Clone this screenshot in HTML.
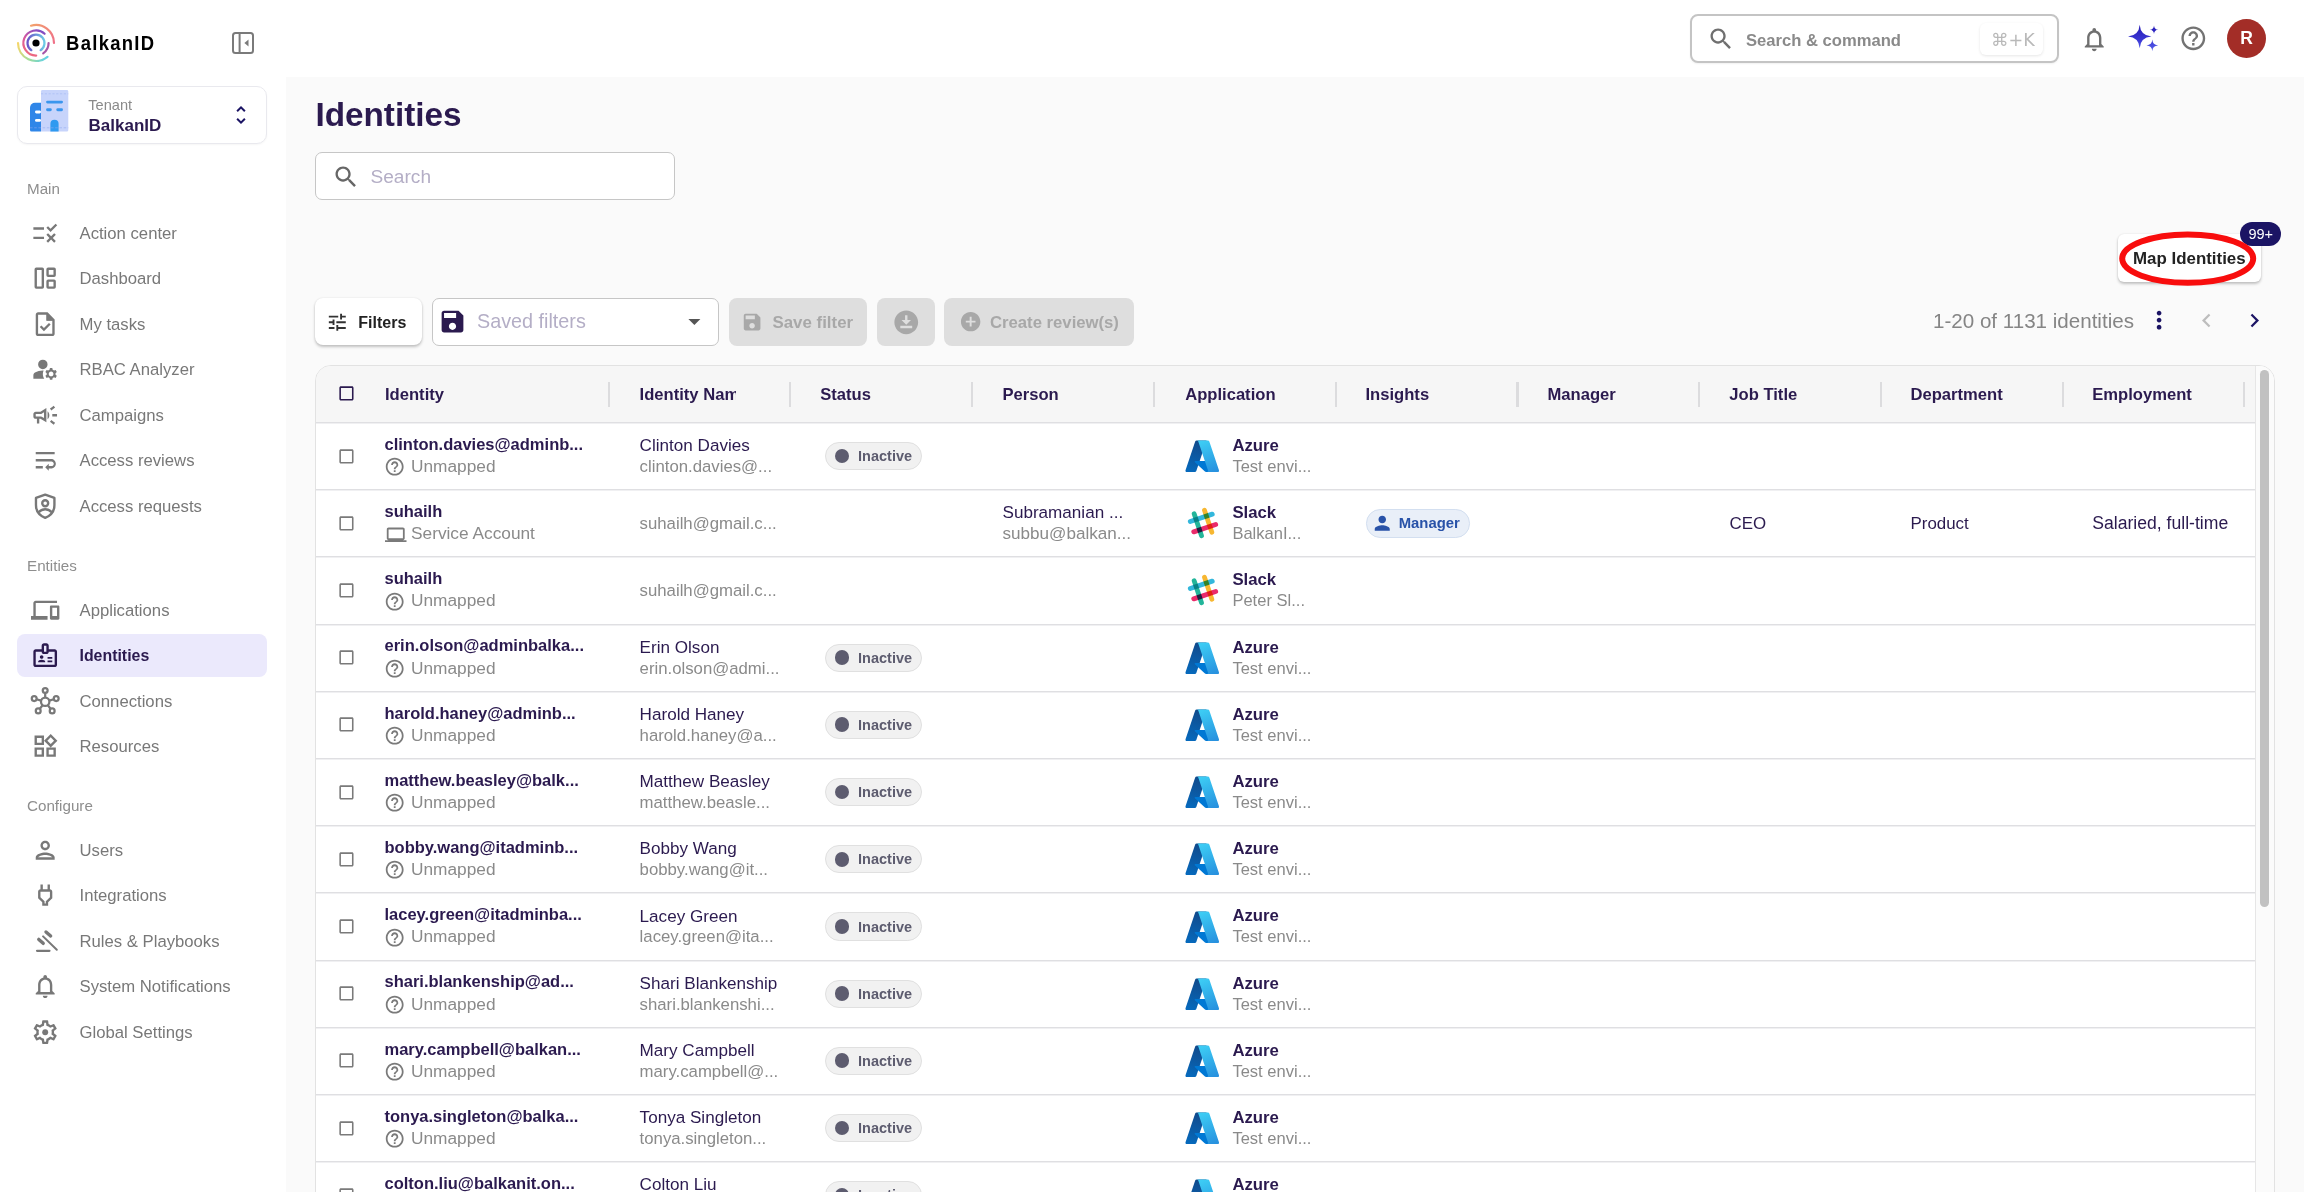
<!DOCTYPE html><html lang="en"><head><meta charset="utf-8"><title>Identities - BalkanID</title><style>
*{box-sizing:border-box;margin:0;padding:0}
html,body{width:2304px;height:1192px;overflow:hidden;background:#fff;font-family:"Liberation Sans",sans-serif}
#root{position:relative;width:2304px;height:1192px;overflow:hidden;will-change:transform}
.ic{position:absolute;display:block;overflow:visible}
.t{position:absolute;white-space:nowrap}
#main{position:absolute;left:286px;top:76.500px;width:2018px;height:1116px;background:#fafafa}
.tenant{position:absolute;left:17px;top:86px;width:250px;height:58px;border:1.500px solid #e9e9ee;border-radius:10px;background:#fff;box-shadow:0 1px 2px rgba(0,0,0,.04)}
.sel{position:absolute;left:17px;top:633.500px;width:250px;height:43.500px;border-radius:8px;background:#ebe9fc}
.gsearch{position:absolute;left:1690px;top:14px;width:369px;height:48.500px;border:2px solid #c4c4c4;border-radius:8px;background:#fff;box-shadow:0 1px 2px rgba(0,0,0,.06)}
.kbd{position:absolute;left:1980px;top:23px;width:63px;height:32px;border-radius:6px;background:#fff;box-shadow:0 1px 3px rgba(0,0,0,.10)}
.avatar{position:absolute;left:2227px;top:19px;width:39px;height:39px;border-radius:50%;background:#a32d27;color:#fff;font-weight:700;font-size:17.500px;line-height:38px;text-align:center}
.search{position:absolute;left:315px;top:152px;width:360px;height:48px;border:1.500px solid #c6c6c6;border-radius:7px;background:#fff}
.mapbtn{position:absolute;left:2117.800px;top:234px;width:143.500px;height:47.700px;border-radius:6px;background:#fff;box-shadow:0 2px 3px rgba(0,0,0,.22),0 0 2px rgba(0,0,0,.10)}
.badge{position:absolute;left:2240px;top:221.700px;width:41.400px;height:24px;border-radius:12px;background:#1b1464;color:#fff;font-size:14.500px;line-height:24px;text-align:center}
.fbtn{position:absolute;left:315px;top:298px;width:106.700px;height:47px;border-radius:8px;background:#fff;box-shadow:0 2px 3px rgba(0,0,0,.22),0 0 2px rgba(0,0,0,.10)}
.sfsel{position:absolute;left:431.700px;top:298px;width:287.300px;height:47.500px;border:1.500px solid #c6c6c6;border-radius:7px;background:#fff}
.dbtn{position:absolute;top:298px;height:47.500px;border-radius:8px;background:#dedede}
.table{position:absolute;left:315px;top:365px;width:1959.500px;height:900px;border:1.500px solid #e2e2e2;border-radius:16px;background:#fff;overflow:hidden}
.thead{position:absolute;left:0;top:0;right:0;height:58px;background:#f6f6f6}
.rl{position:absolute;left:316px;width:1940px;height:2px;background:linear-gradient(#dfdfe2 50%,#f0f0f2 50%)}
.sep{position:absolute;top:382px;width:2.200px;height:24.700px;background:#dcdcde}
.sbtrack{position:absolute;left:2255px;top:366px;width:18.500px;height:840px;background:#fbfbfb;border-left:1px solid #e6e6e6;border-top-right-radius:15px}
.sbthumb{position:absolute;left:2260px;top:370px;width:9px;height:537px;border-radius:4.500px;background:#c1c1c1}
.chip{position:absolute;left:825.200px;width:97.300px;height:28.300px;border-radius:14.200px;background:#f1f1f1;border:1px solid #e0e0e0}
.dot{position:absolute;left:834.600px;width:14.800px;height:14.800px;border-radius:50%;background:#5d5c6f}
.mchip{position:absolute;left:1366px;width:104.200px;height:28.400px;border-radius:14.200px;background:#e9eff8;border:1px solid #d3dff0}
</style></head><body><div id="root">
<div id="main"></div>
<svg class="ic" style="left:14.00px;top:21.10px;width:44px;height:44px" viewBox="-22 -22 44 44">
<g fill="none" stroke-linecap="round" stroke-width="2.2">
<path d="M-4.6,7.200 A8.500,8.500 0 1 1 4.600,7.200" stroke="url(#g1)"/>
<path d="M8.600,-9.200 A12.600,12.600 0 1 0 0.200,12.600" stroke="url(#g2)"/>
<path d="M12.600,0 A12.600,12.600 0 0 1 7.200,10.300" stroke="#a657a8"/>
<path d="M-5,-17.300 A18,18 0 0 1 18,0" stroke="url(#g3)"/>
<path d="M-18,0 A18,18 0 0 0 11.500,13.800" stroke="url(#g4)"/>
</g>
<circle cx="0" cy="0" r="3.600" fill="#000"/>
<defs>
<linearGradient id="g1" x1="-8.500" y1="0" x2="8.500" y2="0" gradientUnits="userSpaceOnUse"><stop offset="0" stop-color="#6a55c8"/><stop offset="1" stop-color="#6ccbe6"/></linearGradient>
<linearGradient id="g2" x1="6" y1="-12" x2="-6" y2="12" gradientUnits="userSpaceOnUse"><stop offset="0" stop-color="#7d4cc4"/><stop offset="0.5" stop-color="#d658a0"/><stop offset="1" stop-color="#ee6a7e"/></linearGradient>
<linearGradient id="g3" x1="-5" y1="-17" x2="18" y2="0" gradientUnits="userSpaceOnUse"><stop offset="0" stop-color="#f2a06c"/><stop offset="1" stop-color="#ef7088"/></linearGradient>
<linearGradient id="g4" x1="-18" y1="0" x2="11" y2="14" gradientUnits="userSpaceOnUse"><stop offset="0" stop-color="#f6d66a"/><stop offset="0.55" stop-color="#9fdc9a"/><stop offset="1" stop-color="#62d2e4"/></linearGradient>
</defs></svg>
<div class="t" style="left:66.40px;top:31px;font-size:20.5px;line-height:23px;font-weight:700;color:#000;letter-spacing:1.45px;transform:scaleX(0.9);transform-origin:0 0;">BalkanID</div>
<svg class="ic" style="left:232.25px;top:32.15px;width:22px;height:22px" viewBox="0 0 22 22"><g fill="none" stroke="#7a7a7a" stroke-width="2"><rect x="1" y="1" width="20" height="20" rx="2.500"/><line x1="7.600" y1="1" x2="7.600" y2="21"/></g><path d="M16.500 7.500 V14.500 L12.400 11 Z" fill="#7a7a7a"/></svg>
<div class="tenant"></div>
<svg class="ic" style="left:30px;top:90.200px;width:38.300px;height:41.400px" viewBox="0 0 38.300 41.400">
<path d="M11,1.500 a1.500,1.500 0 0 1 1.500,-1.500 h24.300 a1.500,1.500 0 0 1 1.500,1.500 v38.400 a1.500,1.500 0 0 1 -1.500,1.500 h-25.800 z" fill="#c7d4fb"/>
<path d="M11,12.700 h-6 a5,5 0 0 0 -5,5 v22.200 a1.500,1.500 0 0 0 1.500,1.500 h9.500 z" fill="#2f86e8"/>
<rect x="5" y="20.600" width="6" height="2.800" rx="1.400" fill="#fff"/>
<rect x="5" y="29" width="6" height="2.800" rx="1.400" fill="#fff"/>
<rect x="16.100" y="10.700" width="16.900" height="2.700" rx="1.350" fill="#3a96ee"/>
<rect x="16.100" y="18.300" width="5.700" height="2.900" rx="1.450" fill="#3a96ee"/>
<rect x="26.300" y="18.300" width="6.700" height="2.900" rx="1.450" fill="#3a96ee"/>
<path d="M20.400,41.400 v-7.600 a4.100,4.100 0 0 1 8.200,0 v7.600 z" fill="#2f9af0"/>
<line x1="11" y1="3.800" x2="38.300" y2="3.800" stroke="#a9bbf3" stroke-width="0.700" stroke-dasharray="2.200 1.600"/>
<line x1="0" y1="37.800" x2="38.300" y2="37.800" stroke="#8fa8ee" stroke-width="0.700" stroke-dasharray="2.600 1.600" opacity="0.8"/>
</svg>
<div class="t" style="left:88.30px;top:97px;font-size:14.6px;line-height:16px;font-weight:400;color:#8a8a8a;">Tenant</div>
<div class="t" style="left:88.60px;top:116px;font-size:17.0px;line-height:19px;font-weight:700;color:#2b1a4f;">BalkanID</div>
<svg class="ic" style="left:229.40px;top:103.20px;width:24px;height:24px" viewBox="0 0 24 24" fill="#1b1464"><path d="M12 5.830L15.170 9l1.410-1.410L12 3 7.410 7.590 8.830 9 12 5.830zm0 12.340L8.830 15l-1.410 1.410L12 21l4.590-4.590L15.170 15 12 18.170z"/></svg>
<div class="t" style="left:27.00px;top:180px;font-size:15.2px;line-height:17px;font-weight:400;color:#8e8e8e;">Main</div>
<div class="t" style="left:27.00px;top:557px;font-size:15.2px;line-height:17px;font-weight:400;color:#8e8e8e;">Entities</div>
<div class="t" style="left:27.00px;top:797px;font-size:15.2px;line-height:17px;font-weight:400;color:#8e8e8e;">Configure</div>
<svg class="ic" style="left:31.40px;top:218.60px;width:28.4px;height:28.4px" viewBox="0 0 24 24" fill="#787878"><path d="M16.54 11L13 7.46l1.41-1.41 2.12 2.12 4.24-4.24 1.41 1.41L16.54 11zM11 7H2v2h9V7zm10 6.41L19.59 12 17 14.59 14.41 12 13 13.41 15.59 16 13 18.59 14.41 20 17 17.41 19.59 20 21 18.59 18.41 16 21 13.41zM11 15H2v2h9v-2z"/></svg>
<div class="t" style="left:79.50px;top:224px;font-size:16.7px;line-height:19px;font-weight:400;color:#787878;">Action center</div>
<svg class="ic" style="left:31.40px;top:264.15px;width:28.4px;height:28.4px" viewBox="0 0 24 24"><g fill="none" stroke="#787878" stroke-width="2"><rect x="4" y="4" width="6" height="16" rx="0.5"/><rect x="14" y="4" width="6" height="6" rx="0.5"/><rect x="14" y="14" width="6" height="6" rx="0.5"/></g></svg>
<div class="t" style="left:79.50px;top:269px;font-size:16.7px;line-height:19px;font-weight:400;color:#787878;">Dashboard</div>
<svg class="ic" style="left:31.40px;top:309.70px;width:28.4px;height:28.4px" viewBox="0 0 24 24" fill="#787878"><path d="M14 2H6c-1.1 0-1.99.9-1.99 2L4 20c0 1.1.89 2 1.99 2H18c1.1 0 2-.9 2-2V8l-6-6zm4 18H6V4h7v5h5v11zm-9.18-6.95L7.4 14.46 10.94 18l5.66-5.66-1.41-1.41-4.24 4.24-2.13-2.12z"/><path d="M13.2 3.6 L18.4 8.8 H13.2 Z"/></svg>
<div class="t" style="left:79.50px;top:315px;font-size:16.7px;line-height:19px;font-weight:400;color:#787878;">My tasks</div>
<svg class="ic" style="left:31.40px;top:355.25px;width:28.4px;height:28.4px" viewBox="0 0 24 24" fill="#787878"><path d="M10 4a4 4 0 1 0 0 8 4 4 0 1 0 0-8zM10.67 13.02C10.45 13.01 10.23 13 10 13c-2.42 0-4.68.67-6.61 1.82C2.51 15.34 2 16.32 2 17.35V20h9.26c-.79-1.13-1.26-2.51-1.26-4 0-1.07.25-2.07.67-2.98zM20.75 16c0-.22-.03-.42-.06-.63l1.14-1.01-1-1.73-1.45.49c-.32-.27-.68-.48-1.08-.63L18 11h-2l-.3 1.49c-.4.15-.76.36-1.08.63l-1.45-.49-1 1.73 1.14 1.01c-.03.21-.06.41-.06.63s.03.42.06.63l-1.14 1.01 1 1.73 1.45-.49c.32.27.68.48 1.08.63L16 21h2l.3-1.49c.4-.15.76-.36 1.08-.63l1.45.49 1-1.73-1.14-1.01c.03-.21.06-.41.06-.63zM17 18c-1.1 0-2-.9-2-2s.9-2 2-2 2 .9 2 2-.9 2-2 2z"/></svg>
<div class="t" style="left:79.50px;top:360px;font-size:16.7px;line-height:19px;font-weight:400;color:#787878;">RBAC Analyzer</div>
<svg class="ic" style="left:31.40px;top:400.80px;width:28.4px;height:28.4px" viewBox="0 0 24 24" fill="#787878"><path d="M18 11v2h4v-2h-4zm-2 6.61c.96.71 2.21 1.65 3.2 2.39.4-.53.8-1.07 1.2-1.6-.99-.74-2.24-1.68-3.2-2.4-.4.54-.8 1.08-1.2 1.61zM20.4 5.6c-.4-.53-.8-1.07-1.2-1.6-.99.74-2.24 1.68-3.2 2.4.4.53.8 1.07 1.2 1.6.96-.72 2.21-1.65 3.2-2.4zM4 9c-1.1 0-2 .9-2 2v2c0 1.1.9 2 2 2h1v4h2v-4h1l5 3V6L8 9H4zm5.03 1.71L11 9.53v4.94l-1.97-1.18-.48-.29H4v-2h4.55l.48-.29zM15.5 12c0-1.33-.58-2.53-1.5-3.35v6.69c.92-.81 1.5-2.01 1.5-3.34z"/></svg>
<div class="t" style="left:79.50px;top:406px;font-size:16.7px;line-height:19px;font-weight:400;color:#787878;">Campaigns</div>
<svg class="ic" style="left:31.40px;top:446.35px;width:28.4px;height:28.4px" viewBox="0 0 24 24" fill="#787878"><path d="M4 19h6v-2H4v2zM20 5H4v2h16V5zm-3 6H4v2h13.25c1.1 0 2 .9 2 2s-.9 2-2 2H15v-2l-3 3 3 3v-2h2c2.21 0 4-1.79 4-4s-1.790-4-4-4z"/></svg>
<div class="t" style="left:79.50px;top:451px;font-size:16.7px;line-height:19px;font-weight:400;color:#787878;">Access reviews</div>
<svg class="ic" style="left:31.40px;top:491.90px;width:28.4px;height:28.4px" viewBox="0 0 24 24"><g fill="none" stroke="#787878" stroke-width="2" stroke-linejoin="round"><path d="M12 2.2 L4.2 5 V11 C4.2 16 7.4 20 12 21.8 C16.6 20 19.800 16 19.800 11 V5 Z"/><circle cx="12" cy="9.500" r="2.500"/><path d="M6.500 17.200 C8 15.300 10 14.600 12 14.600 C14 14.600 16 15.300 17.500 17.200"/></g></svg>
<div class="t" style="left:79.50px;top:497px;font-size:16.7px;line-height:19px;font-weight:400;color:#787878;">Access requests</div>
<svg class="ic" style="left:31.40px;top:595.60px;width:28.4px;height:28.4px" viewBox="0 0 24 24" fill="#787878"><path d="M4 6h18V4H4c-1.1 0-2 .9-2 2v11H0v3h14v-3H4V6zm19 2h-6c-.55 0-1 .45-1 1v10c0 .55.45 1 1 1h6c.55 0 1-.45 1-1V9c0-.55-.45-1-1-1zm-1 9h-4v-7h4v7z"/></svg>
<div class="t" style="left:79.50px;top:601px;font-size:16.7px;line-height:19px;font-weight:400;color:#787878;">Applications</div>
<div class="sel"></div>
<svg class="ic" style="left:31.40px;top:641.15px;width:28.4px;height:28.4px" viewBox="0 0 24 24" fill="#2b1a4f"><path d="M20 7h-5V4c0-1.1-.9-2-2-2h-2c-1.1 0-2 .9-2 2v3H4c-1.1 0-2 .9-2 2v11c0 1.1.9 2 2 2h16c1.1 0 2-.9 2-2V9c0-1.1-.9-2-2-2zm-9-3h2v5h-2V4zm9 16H4V9h5c0 1.1.9 2 2 2h2c1.1 0 2-.9 2-2h5v11zM9 15c.83 0 1.5-.67 1.5-1.5S9.83 12 9 12s-1.5.67-1.5 1.5S8.17 15 9 15zm2.080 1.180C10.440 15.900 9.740 15.750 9 15.750s-1.440.150-2.080.430c-.560.240-.920.780-.920 1.390V18h6v-.430c0-.610-.360-1.150-.920-1.390zM14 16.500h4V18h-4zm0-3h4V15h-4z"/></svg>
<div class="t" style="left:79.50px;top:647px;font-size:15.9px;line-height:17px;font-weight:700;color:#2b1a4f;">Identities</div>
<svg class="ic" style="left:31.40px;top:686.70px;width:28.4px;height:28.4px" viewBox="0 0 24 24"><g fill="none" stroke="#787878" stroke-width="1.9"><circle cx="12" cy="12.5" r="3.55"/><line x1="12.00" y1="8.95" x2="12.00" y2="4.90"/><circle cx="12" cy="2.9" r="2.05"/><line x1="15.41" y1="11.51" x2="19.38" y2="10.36"/><circle cx="21.3" cy="9.8" r="2.05"/><line x1="14.16" y1="15.32" x2="16.68" y2="18.61"/><circle cx="17.9" cy="20.2" r="2.05"/><line x1="9.84" y1="15.32" x2="7.32" y2="18.61"/><circle cx="6.1" cy="20.2" r="2.05"/><line x1="8.59" y1="11.51" x2="4.62" y2="10.36"/><circle cx="2.7" cy="9.8" r="2.05"/></g></svg>
<div class="t" style="left:79.50px;top:692px;font-size:16.7px;line-height:19px;font-weight:400;color:#787878;">Connections</div>
<svg class="ic" style="left:31.40px;top:732.25px;width:28.4px;height:28.4px" viewBox="0 0 24 24" fill="#787878"><path d="M16.66 4.52l2.83 2.83-2.83 2.830-2.830-2.830 2.830-2.830M9 5v4H5V5h4m10 10v4h-4v-4h4M9 15v4H5v-4h4m7.660-13.310L11 7.340 16.660 13l5.660-5.660-5.660-5.650zM11 3H3v8h8V3zm10 10h-8v8h8v-8zm-10 0H3v8h8v-8z"/></svg>
<div class="t" style="left:79.50px;top:737px;font-size:16.7px;line-height:19px;font-weight:400;color:#787878;">Resources</div>
<svg class="ic" style="left:31.40px;top:835.60px;width:28.4px;height:28.4px" viewBox="0 0 24 24" fill="#787878"><path d="M12 6c1.1 0 2 .9 2 2s-.9 2-2 2-2-.9-2-2 .9-2 2-2m0 10c2.7 0 5.8 1.290 6 2H6c.230-.720 3.310-2 6-2m0-12C9.790 4 8 5.790 8 8s1.790 4 4 4 4-1.790 4-4-1.790-4-4-4zm0 10c-2.670 0-8 1.340-8 4v2h16v-2c0-2.660-5.330-4-8-4z"/></svg>
<div class="t" style="left:79.50px;top:841px;font-size:16.7px;line-height:19px;font-weight:400;color:#787878;">Users</div>
<svg class="ic" style="left:31.40px;top:881.15px;width:28.4px;height:28.4px" viewBox="0 0 24 24" fill="#787878"><path d="M16 9v4.660l-3.500 3.510V19h-1v-1.830L8 13.650V9h8m0-6h-2v4h-4V3H8v4h-.010C6.900 6.990 6 7.890 6 8.980v5.520L9.500 18v3h5v-3l3.500-3.510V9c0-1.100-.9-2-2-2V3z"/></svg>
<div class="t" style="left:79.50px;top:886px;font-size:16.7px;line-height:19px;font-weight:400;color:#787878;">Integrations</div>
<svg class="ic" style="left:31.40px;top:926.70px;width:28.4px;height:28.4px" viewBox="0 0 24 24"><g fill="none" stroke="#787878" stroke-linecap="round"><line x1="5.1" y1="20.100" x2="15.600" y2="20.100" stroke-width="1.900"/><line x1="10.200" y1="7.900" x2="21.800" y2="19.200" stroke-width="1.700"/><line x1="12.700" y1="4.200" x2="16.600" y2="7.600" stroke-width="2.900"/><line x1="6.600" y1="10.500" x2="10.300" y2="13.800" stroke-width="2.900"/></g></svg>
<div class="t" style="left:79.50px;top:932px;font-size:16.7px;line-height:19px;font-weight:400;color:#787878;">Rules &amp; Playbooks</div>
<svg class="ic" style="left:31.40px;top:972.25px;width:28.4px;height:28.4px" viewBox="0 0 24 24" fill="#787878"><path d="M12 22c1.100 0 2-.9 2-2h-4c0 1.100.9 2 2 2zm6-6v-5c0-3.070-1.630-5.640-4.500-6.320V4c0-.830-.670-1.500-1.500-1.500s-1.500.670-1.500 1.500v.680C7.640 5.360 6 7.920 6 11v5l-2 2v1h16v-1l-2-2zm-2 1H8v-6c0-2.480 1.510-4.500 4-4.500s4 2.020 4 4.500v6z"/></svg>
<div class="t" style="left:79.50px;top:977px;font-size:16.7px;line-height:19px;font-weight:400;color:#787878;">System Notifications</div>
<svg class="ic" style="left:31.40px;top:1017.80px;width:28.4px;height:28.4px" viewBox="0 0 24 24" fill="#787878"><path d="M19.43 12.98c.04-.32.07-.64.07-.98 0-.34-.03-.66-.07-.98l2.110-1.650c.19-.15.24-.42.12-.64l-2-3.460c-.09-.16-.26-.25-.44-.25-.06 0-.12.01-.17.03l-2.490 1c-.52-.4-1.080-.73-1.690-.98l-.38-2.650C14.460 2.180 14.250 2 14 2h-4c-.25 0-.46.18-.49.42l-.38 2.650c-.61.25-1.170.59-1.690.98l-2.490-1c-.06-.02-.12-.03-.18-.03-.17 0-.34.09-.43.25l-2 3.460c-.13.22-.07.49.12.64l2.110 1.650c-.04.32-.07.65-.07.98 0 .33.03.66.07.98l-2.110 1.650c-.19.15-.24.42-.12.64l2 3.460c.09.16.26.25.44.25.06 0 .12-.01.17-.03l2.490-1c.52.4 1.080.73 1.690.98l.38 2.650c.03.24.24.42.49.42h4c.25 0 .46-.18.49-.42l.38-2.650c.61-.25 1.170-.59 1.690-.98l2.490 1c.06.02.12.03.18.03.17 0 .34-.09.43-.25l2-3.460c.12-.22.07-.49-.12-.64l-2.110-1.650zm-1.980-1.710c.04.31.05.52.05.73 0 .21-.02.43-.05.73l-.14 1.130.89.7 1.080.84-.7 1.210-1.270-.51-1.040-.42-.9.68c-.43.32-.84.56-1.250.73l-1.060.43-.16 1.130-.2 1.350h-1.400l-.19-1.350-.16-1.130-1.060-.43c-.43-.18-.83-.41-1.230-.71l-.91-.7-1.060.43-1.270.51-.7-1.210 1.080-.84.89-.7-.14-1.130c-.03-.31-.05-.54-.05-.74s.02-.43.05-.73l.14-1.130-.89-.7-1.080-.84.7-1.210 1.270.51 1.040.42.9-.68c.43-.32.84-.56 1.250-.73l1.060-.43.16-1.130.2-1.350h1.390l.19 1.350.16 1.130 1.060.43c.43.18.83.41 1.230.71l.91.7 1.060-.43 1.270-.51.7 1.210-1.070.85-.89.7.14 1.130z"/><circle cx="12" cy="12" r="2.5"/></svg>
<div class="t" style="left:79.50px;top:1023px;font-size:16.7px;line-height:19px;font-weight:400;color:#787878;">Global Settings</div>
<div class="gsearch"></div>
<svg class="ic" style="left:1706.50px;top:25.00px;width:28px;height:28px" viewBox="0 0 24 24" fill="#6f6f6f"><path d="M15.5 14h-.79l-.28-.27C15.41 12.59 16 11.11 16 9.5 16 5.91 13.09 3 9.5 3S3 5.91 3 9.5 5.91 16 9.5 16c1.610 0 3.090-.59 4.230-1.570l.27.28v.79l5 4.990L20.490 19l-4.990-5zm-6 0C7.010 14 5 11.990 5 9.500S7.010 5 9.500 5 14 7.010 14 9.500 11.990 14 9.500 14z"/></svg>
<div class="t" style="left:1746.00px;top:31px;font-size:16.6px;line-height:19px;font-weight:700;color:#8a8a8a;">Search &amp; command</div>
<div class="kbd"></div>
<div class="t" style="left:1991.00px;top:30px;font-size:17.6px;line-height:20px;font-weight:400;color:#b9b9b9;font-family:'DejaVu Sans','Liberation Sans',sans-serif;">&#8984;+K</div>
<svg class="ic" style="left:2079.55px;top:25.35px;width:28.5px;height:28.5px" viewBox="0 0 24 24" fill="#707070"><path d="M12 22c1.100 0 2-.9 2-2h-4c0 1.100.9 2 2 2zm6-6v-5c0-3.070-1.630-5.640-4.500-6.320V4c0-.830-.670-1.500-1.500-1.500s-1.500.670-1.500 1.500v.680C7.640 5.360 6 7.920 6 11v5l-2 2v1h16v-1l-2-2zm-2 1H8v-6c0-2.480 1.510-4.500 4-4.500s4 2.020 4 4.500v6z"/></svg>
<svg class="ic" style="left:2124px;top:20px;width:40px;height:36px" viewBox="2124 20 40 36"><defs><linearGradient id="spk" x1="0" y1="24" x2="0" y2="52" gradientUnits="userSpaceOnUse"><stop offset="0" stop-color="#2418b4"/><stop offset="0.55" stop-color="#3a36d2"/><stop offset="1" stop-color="#5a66ee"/></linearGradient></defs><path fill="url(#spk)" d="M2139.7,24.8 Q2140.52,35.68 2151.3999999999996,36.5 Q2140.52,37.32 2139.7,48.2 Q2138.88,37.32 2128.0,36.5 Q2138.88,35.68 2139.7,24.8 Z M2154.0,25.4 Q2154.22,29.48 2158.3,29.7 Q2154.22,29.91 2154.0,34.0 Q2153.78,29.91 2149.7,29.7 Q2153.78,29.48 2154.0,25.4 Z M2152.3,39.6 Q2152.59,45.11 2158.1000000000004,45.4 Q2152.59,45.69 2152.3,51.199999999999996 Q2152.01,45.69 2146.5,45.4 Q2152.01,45.11 2152.3,39.6 Z"/></svg>
<svg class="ic" style="left:2179.00px;top:24.30px;width:28.6px;height:28.6px" viewBox="0 0 24 24" fill="#737373"><path d="M11 18h2v-2h-2v2zm1-16C6.480 2 2 6.480 2 12s4.480 10 10 10 10-4.480 10-10S17.520 2 12 2zm0 18c-4.410 0-8-3.590-8-8s3.590-8 8-8 8 3.590 8 8-3.590 8-8 8zm0-14c-2.210 0-4 1.790-4 4h2c0-1.100.9-2 2-2s2 .9 2 2c0 2-3 1.750-3 5h2c0-2.250 3-2.500 3-5 0-2.210-1.790-4-4-4z"/></svg>
<div class="avatar">R</div>
<div class="t" style="left:315.40px;top:96px;font-size:33.3px;line-height:37px;font-weight:700;color:#2b1a4f;">Identities</div>
<div class="search"></div>
<svg class="ic" style="left:331.50px;top:162.50px;width:28px;height:28px" viewBox="0 0 24 24" fill="#666"><path d="M15.5 14h-.79l-.28-.27C15.41 12.59 16 11.11 16 9.5 16 5.91 13.09 3 9.5 3S3 5.91 3 9.5 5.91 16 9.5 16c1.610 0 3.090-.59 4.230-1.570l.27.28v.79l5 4.990L20.490 19l-4.990-5zm-6 0C7.010 14 5 11.990 5 9.500S7.010 5 9.500 5 14 7.010 14 9.500 11.990 14 9.500 14z"/></svg>
<div class="t" style="left:370.50px;top:166px;font-size:19.1px;line-height:21px;font-weight:400;color:#b4aec6;">Search</div>
<div class="mapbtn"></div>
<div class="t" style="left:2133.00px;top:249px;font-size:16.9px;line-height:19px;font-weight:700;color:#222;">Map Identities</div>
<div class="badge">99+</div>
<svg class="ic" style="left:2110px;top:222px;width:160px;height:74px" viewBox="2110 222 160 74"><ellipse cx="2187.700" cy="258.600" rx="65.500" ry="24.200" fill="none" stroke="#f80d0d" stroke-width="6"/></svg>
<div class="fbtn"></div>
<svg class="ic" style="left:326.20px;top:310.50px;width:22.6px;height:22.6px" viewBox="0 0 24 24" fill="#333"><path d="M3 17v2h6v-2H3zM3 5v2h10V5H3zm10 16v-2h8v-2h-8v-2h-2v6h2zM7 9v2H3v2h4v2h2V9H7zm14 4v-2H11v2h10zm-6-4h2V7h4V5h-4V3h-2v6z"/></svg>
<div class="t" style="left:358.30px;top:314px;font-size:16.0px;line-height:17px;font-weight:700;color:#222;">Filters</div>
<div class="sfsel"></div>
<svg class="ic" style="left:438.30px;top:307.10px;width:29px;height:29px" viewBox="0 0 24 24" fill="#2b1a4f"><path d="M17 3H5c-1.110 0-2 .9-2 2v14c0 1.100.890 2 2 2h14c1.100 0 2-.9 2-2V7l-4-4zm-5 16c-1.660 0-3-1.340-3-3s1.340-3 3-3 3 1.340 3 3-1.340 3-3 3zm3-10H5V5h10v4z"/></svg>
<div class="t" style="left:477.00px;top:310px;font-size:19.8px;line-height:22px;font-weight:400;color:#b4aec6;">Saved filters</div>
<svg class="ic" style="left:679.60px;top:307.40px;width:28.8px;height:28.8px" viewBox="0 0 24 24" fill="#555"><path d="M7 10l5 5 5-5z"/></svg>
<div class="dbtn" style="left:729px;width:138px"></div>
<svg class="ic" style="left:741.00px;top:310.60px;width:22.2px;height:22.2px" viewBox="0 0 24 24" fill="#a8a8a8"><path d="M17 3H5c-1.110 0-2 .9-2 2v14c0 1.100.890 2 2 2h14c1.100 0 2-.9 2-2V7l-4-4zm-5 16c-1.660 0-3-1.340-3-3s1.340-3 3-3 3 1.340 3 3-1.340 3-3 3zm3-10H5V5h10v4z"/></svg>
<div class="t" style="left:772.50px;top:313px;font-size:16.86px;line-height:19px;font-weight:700;color:#a8a8a8;">Save filter</div>
<div class="dbtn" style="left:877px;width:57.500px"></div>
<svg class="ic" style="left:891.75px;top:307.75px;width:28.5px;height:28.5px" viewBox="0 0 24 24" fill="#a8a8a8"><path d="M12 2C6.490 2 2 6.490 2 12s4.490 10 10 10 10-4.490 10-10S17.510 2 12 2zm-1 8V6h2v4h3l-4 4-4-4h3zm6 7H7v-2h10v2z"/></svg>
<div class="dbtn" style="left:944.200px;width:189.800px"></div>
<svg class="ic" style="left:958.85px;top:310.05px;width:23.3px;height:23.3px" viewBox="0 0 24 24" fill="#a8a8a8"><path d="M12 2C6.480 2 2 6.480 2 12s4.480 10 10 10 10-4.480 10-10S17.520 2 12 2zm5 11h-4v4h-2v-4H7v-2h4V7h2v4h4v2z"/></svg>
<div class="t" style="left:990.00px;top:313px;font-size:16.7px;line-height:19px;font-weight:700;color:#a8a8a8;">Create review(s)</div>
<div class="t" style="left:1933.00px;top:309px;font-size:20.58px;line-height:23px;font-weight:400;color:#858585;">1-20 of 1131 identities</div>
<svg class="ic" style="left:2144.50px;top:306.40px;width:28.2px;height:28.2px" viewBox="0 0 24 24" fill="#1b1464"><path d="M12 8c1.100 0 2-.9 2-2s-.9-2-2-2-2 .9-2 2 .9 2 2 2zm0 2c-1.100 0-2 .9-2 2s.9 2 2 2 2-.9 2-2-.9-2-2-2zm0 6c-1.100 0-2 .9-2 2s.9 2 2 2 2-.9 2-2-.9-2-2-2z"/></svg>
<svg class="ic" style="left:2192.50px;top:307.00px;width:27px;height:27px" viewBox="0 0 24 24" fill="#bdbdbd"><path d="M15.410 7.410L14 6l-6 6 6 6 1.410-1.410L10.830 12z"/></svg>
<svg class="ic" style="left:2241.30px;top:307.00px;width:27px;height:27px" viewBox="0 0 24 24" fill="#1b1464"><path d="M10 6L8.590 7.410 13.170 12l-4.580 4.590L10 18l6-6z"/></svg>
<div class="table"><div class="thead"></div></div>
<div class="rl" style="top:422px"></div>
<div class="rl" style="top:489px"></div>
<div class="rl" style="top:556px"></div>
<div class="rl" style="top:624px"></div>
<div class="rl" style="top:691px"></div>
<div class="rl" style="top:758px"></div>
<div class="rl" style="top:825px"></div>
<div class="rl" style="top:892px"></div>
<div class="rl" style="top:960px"></div>
<div class="rl" style="top:1027px"></div>
<div class="rl" style="top:1094px"></div>
<div class="rl" style="top:1161px"></div>
<div class="rl" style="top:1228px"></div>
<div class="sbtrack"></div><div class="sbthumb"></div>
<div class="sep" style="left:607.90px"></div>
<div class="sep" style="left:789.30px"></div>
<div class="sep" style="left:970.60px"></div>
<div class="sep" style="left:1153.30px"></div>
<div class="sep" style="left:1334.90px"></div>
<div class="sep" style="left:1516.40px"></div>
<div class="sep" style="left:1698.20px"></div>
<div class="sep" style="left:1879.70px"></div>
<div class="sep" style="left:2061.50px"></div>
<div class="sep" style="left:2242.90px"></div>
<div class="t" style="left:385.00px;top:385px;font-size:16.6px;line-height:19px;font-weight:700;color:#2b1a4f;">Identity</div>
<div class="t" style="left:639.60px;top:385px;font-size:16.6px;line-height:19px;font-weight:700;color:#2b1a4f;width:96px;overflow:hidden;">Identity Name</div>
<div class="t" style="left:820.20px;top:385px;font-size:16.6px;line-height:19px;font-weight:700;color:#2b1a4f;">Status</div>
<div class="t" style="left:1002.50px;top:385px;font-size:16.6px;line-height:19px;font-weight:700;color:#2b1a4f;">Person</div>
<div class="t" style="left:1185.20px;top:385px;font-size:16.6px;line-height:19px;font-weight:700;color:#2b1a4f;">Application</div>
<div class="t" style="left:1365.50px;top:385px;font-size:16.6px;line-height:19px;font-weight:700;color:#2b1a4f;">Insights</div>
<div class="t" style="left:1547.50px;top:385px;font-size:16.6px;line-height:19px;font-weight:700;color:#2b1a4f;">Manager</div>
<div class="t" style="left:1729.30px;top:385px;font-size:16.6px;line-height:19px;font-weight:700;color:#2b1a4f;">Job Title</div>
<div class="t" style="left:1910.50px;top:385px;font-size:16.6px;line-height:19px;font-weight:700;color:#2b1a4f;">Department</div>
<div class="t" style="left:2092.30px;top:385px;font-size:16.6px;line-height:19px;font-weight:700;color:#2b1a4f;">Employment</div>
<svg class="ic" style="left:336.65px;top:384.25px;width:18.9px;height:18.9px" viewBox="0 0 24 24" fill="#2b1a4f"><path d="M19 5v14H5V5h14m0-2H5c-1.100 0-2 .9-2 2v14c0 1.100.9 2 2 2h14c1.100 0 2-.9 2-2V5c0-1.100-.9-2-2-2z"/></svg>
<svg class="ic" style="left:336.60px;top:446.65px;width:18.9px;height:18.9px" viewBox="0 0 24 24" fill="#7a7a7a"><path d="M19 5v14H5V5h14m0-2H5c-1.100 0-2 .9-2 2v14c0 1.100.9 2 2 2h14c1.100 0 2-.9 2-2V5c0-1.100-.9-2-2-2z"/></svg>
<div class="t" style="left:384.50px;top:435px;font-size:16.5px;line-height:18px;font-weight:700;color:#2b1a4f;">clinton.davies@adminb...</div>
<svg class="ic" style="left:384.00px;top:456.20px;width:21.4px;height:21.4px" viewBox="0 0 24 24" fill="#7a7a7a"><path d="M11 18h2v-2h-2v2zm1-16C6.480 2 2 6.480 2 12s4.480 10 10 10 10-4.480 10-10S17.520 2 12 2zm0 18c-4.410 0-8-3.590-8-8s3.590-8 8-8 8 3.590 8 8-3.590 8-8 8zm0-14c-2.210 0-4 1.790-4 4h2c0-1.100.9-2 2-2s2 .9 2 2c0 2-3 1.750-3 5h2c0-2.250 3-2.500 3-5 0-2.210-1.790-4-4-4z"/></svg>
<div class="t" style="left:411.00px;top:456px;font-size:17.3px;line-height:20px;font-weight:400;color:#8a8a8a;">Unmapped</div>
<div class="t" style="left:639.60px;top:436px;font-size:17.1px;line-height:19px;font-weight:400;color:#2b1a4f;">Clinton Davies</div>
<div class="t" style="left:639.60px;top:457px;font-size:16.75px;line-height:19px;font-weight:400;color:#8a8a8a;">clinton.davies@...</div>
<div class="chip" style="top:442.00px"></div><div class="dot" style="top:448.60px"></div>
<div class="t" style="left:858.10px;top:448px;font-size:14.5px;line-height:16px;font-weight:700;color:#5d5c6f;">Inactive</div>
<svg class="ic" style="left:1184.2px;top:438.20px;width:36.500px;height:36.500px" viewBox="0 0 96 96"><defs><linearGradient id="aza0" x1="0.5" y1="0" x2="0.300" y2="1"><stop offset="0" stop-color="#114a8b"/><stop offset="1" stop-color="#0669bc"/></linearGradient><linearGradient id="azb0" x1="0.4" y1="0" x2="0.700" y2="1"><stop offset="0" stop-color="#3ccbf4"/><stop offset="1" stop-color="#2892df"/></linearGradient></defs>
<path d="M33.340 6.540h26.040l-27.030 80.100a4.150 4.150 0 0 1-3.940 2.810H8.150a4.140 4.140 0 0 1-3.930-5.470L29.400 9.380a4.150 4.150 0 0 1 3.940-2.830z" fill="url(#aza0)"/>
<path d="M71.170 60.260H29.880a1.910 1.910 0 0 0-1.300 3.310l26.530 24.760a4.170 4.170 0 0 0 2.850 1.130h23.380z" fill="#0078d4"/>
<path d="M66.600 9.360a4.140 4.140 0 0 0-3.930-2.820H33.650a4.150 4.150 0 0 1 3.930 2.820l25.180 74.620a4.150 4.150 0 0 1-3.930 5.480h29.020a4.150 4.150 0 0 0 3.930-5.480z" fill="url(#azb0)"/></svg>
<div class="t" style="left:1232.40px;top:436px;font-size:16.75px;line-height:19px;font-weight:700;color:#2b1a4f;">Azure</div>
<div class="t" style="left:1232.40px;top:457px;font-size:16.55px;line-height:19px;font-weight:400;color:#8a8a8a;">Test envi...</div>
<svg class="ic" style="left:336.60px;top:513.85px;width:18.9px;height:18.9px" viewBox="0 0 24 24" fill="#7a7a7a"><path d="M19 5v14H5V5h14m0-2H5c-1.100 0-2 .9-2 2v14c0 1.100.9 2 2 2h14c1.100 0 2-.9 2-2V5c0-1.100-.9-2-2-2z"/></svg>
<div class="t" style="left:384.50px;top:502px;font-size:16.5px;line-height:18px;font-weight:700;color:#2b1a4f;">suhailh</div>
<svg class="ic" style="left:384.50px;top:523.55px;width:21.5px;height:21.5px" viewBox="0 0 24 24" fill="#7a7a7a"><path d="M20 18c1.100 0 1.990-.9 1.990-2L22 6c0-1.100-.9-2-2-2H4c-1.100 0-2 .9-2 2v10c0 1.100.9 2 2 2H0v2h24v-2h-4zM4 6h16v10H4V6z"/></svg>
<div class="t" style="left:411.00px;top:523px;font-size:17.3px;line-height:20px;font-weight:400;color:#8a8a8a;">Service Account</div>
<div class="t" style="left:639.60px;top:514px;font-size:16.75px;line-height:19px;font-weight:400;color:#8a8a8a;">suhailh@gmail.c...</div>
<svg class="ic" style="left:1185.60px;top:506.10px;width:34px;height:34px;isolation:isolate" viewBox="-17 -17 34 34"><g transform="rotate(-18.500)" stroke-linecap="round" stroke-width="4.800" fill="none"><line x1="-5.45" y1="-11.6" x2="-5.450" y2="11.600" stroke="#22b59a" style="mix-blend-mode:multiply"/><line x1="5.450" y1="-11.600" x2="5.450" y2="11.600" stroke="#f7b731" style="mix-blend-mode:multiply"/><line x1="-11.600" y1="-5.450" x2="11.600" y2="-5.450" stroke="#33b7dc" style="mix-blend-mode:multiply"/><line x1="-11.600" y1="5.450" x2="11.600" y2="5.450" stroke="#ea2a6a" style="mix-blend-mode:multiply"/></g></svg>
<div class="t" style="left:1232.40px;top:503px;font-size:16.75px;line-height:19px;font-weight:700;color:#2b1a4f;">Slack</div>
<div class="t" style="left:1232.40px;top:524px;font-size:16.55px;line-height:19px;font-weight:400;color:#8a8a8a;">BalkanI...</div>
<div class="t" style="left:1002.50px;top:503px;font-size:17.1px;line-height:19px;font-weight:400;color:#2b1a4f;">Subramanian ...</div>
<div class="t" style="left:1002.50px;top:524px;font-size:17.1px;line-height:19px;font-weight:400;color:#8a8a8a;">subbu@balkan...</div>
<div class="mchip" style="top:509.40px"></div>
<svg class="ic" style="left:1371.25px;top:512.35px;width:22.5px;height:22.5px" viewBox="0 0 24 24" fill="#2852a8"><path d="M12 12c2.210 0 4-1.790 4-4s-1.790-4-4-4-4 1.790-4 4 1.790 4 4 4zm0 2c-2.670 0-8 1.340-8 4v2h16v-2c0-2.660-5.330-4-8-4z"/></svg>
<div class="t" style="left:1398.75px;top:515px;font-size:14.85px;line-height:16px;font-weight:700;color:#2852a8;">Manager</div>
<div class="t" style="left:1729.50px;top:514px;font-size:16.9px;line-height:19px;font-weight:400;color:#2b1a4f;">CEO</div>
<div class="t" style="left:1910.50px;top:514px;font-size:16.9px;line-height:19px;font-weight:400;color:#2b1a4f;">Product</div>
<div class="t" style="left:2092.30px;top:513px;font-size:17.6px;line-height:20px;font-weight:400;color:#2b1a4f;">Salaried, full-time</div>
<svg class="ic" style="left:336.60px;top:581.05px;width:18.9px;height:18.9px" viewBox="0 0 24 24" fill="#7a7a7a"><path d="M19 5v14H5V5h14m0-2H5c-1.100 0-2 .9-2 2v14c0 1.100.9 2 2 2h14c1.100 0 2-.9 2-2V5c0-1.100-.9-2-2-2z"/></svg>
<div class="t" style="left:384.50px;top:569px;font-size:16.5px;line-height:18px;font-weight:700;color:#2b1a4f;">suhailh</div>
<svg class="ic" style="left:384.00px;top:590.60px;width:21.4px;height:21.4px" viewBox="0 0 24 24" fill="#7a7a7a"><path d="M11 18h2v-2h-2v2zm1-16C6.480 2 2 6.480 2 12s4.480 10 10 10 10-4.480 10-10S17.520 2 12 2zm0 18c-4.410 0-8-3.590-8-8s3.590-8 8-8 8 3.590 8 8-3.590 8-8 8zm0-14c-2.210 0-4 1.790-4 4h2c0-1.100.9-2 2-2s2 .9 2 2c0 2-3 1.750-3 5h2c0-2.250 3-2.500 3-5 0-2.210-1.790-4-4-4z"/></svg>
<div class="t" style="left:411.00px;top:590px;font-size:17.3px;line-height:20px;font-weight:400;color:#8a8a8a;">Unmapped</div>
<div class="t" style="left:639.60px;top:581px;font-size:16.75px;line-height:19px;font-weight:400;color:#8a8a8a;">suhailh@gmail.c...</div>
<svg class="ic" style="left:1185.60px;top:573.30px;width:34px;height:34px;isolation:isolate" viewBox="-17 -17 34 34"><g transform="rotate(-18.500)" stroke-linecap="round" stroke-width="4.800" fill="none"><line x1="-5.45" y1="-11.6" x2="-5.450" y2="11.600" stroke="#22b59a" style="mix-blend-mode:multiply"/><line x1="5.450" y1="-11.600" x2="5.450" y2="11.600" stroke="#f7b731" style="mix-blend-mode:multiply"/><line x1="-11.600" y1="-5.450" x2="11.600" y2="-5.450" stroke="#33b7dc" style="mix-blend-mode:multiply"/><line x1="-11.600" y1="5.450" x2="11.600" y2="5.450" stroke="#ea2a6a" style="mix-blend-mode:multiply"/></g></svg>
<div class="t" style="left:1232.40px;top:570px;font-size:16.75px;line-height:19px;font-weight:700;color:#2b1a4f;">Slack</div>
<div class="t" style="left:1232.40px;top:591px;font-size:16.55px;line-height:19px;font-weight:400;color:#8a8a8a;">Peter Sl...</div>
<svg class="ic" style="left:336.60px;top:648.25px;width:18.9px;height:18.9px" viewBox="0 0 24 24" fill="#7a7a7a"><path d="M19 5v14H5V5h14m0-2H5c-1.100 0-2 .9-2 2v14c0 1.100.9 2 2 2h14c1.100 0 2-.9 2-2V5c0-1.100-.9-2-2-2z"/></svg>
<div class="t" style="left:384.50px;top:636px;font-size:16.5px;line-height:18px;font-weight:700;color:#2b1a4f;">erin.olson@adminbalka...</div>
<svg class="ic" style="left:384.00px;top:657.80px;width:21.4px;height:21.4px" viewBox="0 0 24 24" fill="#7a7a7a"><path d="M11 18h2v-2h-2v2zm1-16C6.480 2 2 6.480 2 12s4.480 10 10 10 10-4.480 10-10S17.520 2 12 2zm0 18c-4.410 0-8-3.590-8-8s3.590-8 8-8 8 3.590 8 8-3.590 8-8 8zm0-14c-2.210 0-4 1.790-4 4h2c0-1.100.9-2 2-2s2 .9 2 2c0 2-3 1.750-3 5h2c0-2.250 3-2.500 3-5 0-2.210-1.790-4-4-4z"/></svg>
<div class="t" style="left:411.00px;top:658px;font-size:17.3px;line-height:20px;font-weight:400;color:#8a8a8a;">Unmapped</div>
<div class="t" style="left:639.60px;top:638px;font-size:17.1px;line-height:19px;font-weight:400;color:#2b1a4f;">Erin Olson</div>
<div class="t" style="left:639.60px;top:659px;font-size:16.75px;line-height:19px;font-weight:400;color:#8a8a8a;">erin.olson@admi...</div>
<div class="chip" style="top:643.60px"></div><div class="dot" style="top:650.20px"></div>
<div class="t" style="left:858.10px;top:650px;font-size:14.5px;line-height:16px;font-weight:700;color:#5d5c6f;">Inactive</div>
<svg class="ic" style="left:1184.2px;top:639.80px;width:36.500px;height:36.500px" viewBox="0 0 96 96"><defs><linearGradient id="aza3" x1="0.5" y1="0" x2="0.300" y2="1"><stop offset="0" stop-color="#114a8b"/><stop offset="1" stop-color="#0669bc"/></linearGradient><linearGradient id="azb3" x1="0.4" y1="0" x2="0.700" y2="1"><stop offset="0" stop-color="#3ccbf4"/><stop offset="1" stop-color="#2892df"/></linearGradient></defs>
<path d="M33.340 6.540h26.040l-27.030 80.100a4.150 4.150 0 0 1-3.940 2.810H8.150a4.140 4.140 0 0 1-3.930-5.470L29.400 9.380a4.150 4.150 0 0 1 3.940-2.830z" fill="url(#aza3)"/>
<path d="M71.170 60.260H29.880a1.910 1.910 0 0 0-1.300 3.310l26.530 24.760a4.170 4.170 0 0 0 2.850 1.130h23.380z" fill="#0078d4"/>
<path d="M66.600 9.360a4.140 4.140 0 0 0-3.930-2.820H33.650a4.150 4.150 0 0 1 3.930 2.820l25.180 74.620a4.150 4.150 0 0 1-3.930 5.480h29.020a4.150 4.150 0 0 0 3.930-5.480z" fill="url(#azb3)"/></svg>
<div class="t" style="left:1232.40px;top:638px;font-size:16.75px;line-height:19px;font-weight:700;color:#2b1a4f;">Azure</div>
<div class="t" style="left:1232.40px;top:659px;font-size:16.55px;line-height:19px;font-weight:400;color:#8a8a8a;">Test envi...</div>
<svg class="ic" style="left:336.60px;top:715.45px;width:18.9px;height:18.9px" viewBox="0 0 24 24" fill="#7a7a7a"><path d="M19 5v14H5V5h14m0-2H5c-1.100 0-2 .9-2 2v14c0 1.100.9 2 2 2h14c1.100 0 2-.9 2-2V5c0-1.100-.9-2-2-2z"/></svg>
<div class="t" style="left:384.50px;top:704px;font-size:16.5px;line-height:18px;font-weight:700;color:#2b1a4f;">harold.haney@adminb...</div>
<svg class="ic" style="left:384.00px;top:725.00px;width:21.4px;height:21.4px" viewBox="0 0 24 24" fill="#7a7a7a"><path d="M11 18h2v-2h-2v2zm1-16C6.480 2 2 6.480 2 12s4.480 10 10 10 10-4.480 10-10S17.520 2 12 2zm0 18c-4.410 0-8-3.590-8-8s3.590-8 8-8 8 3.590 8 8-3.590 8-8 8zm0-14c-2.210 0-4 1.790-4 4h2c0-1.100.9-2 2-2s2 .9 2 2c0 2-3 1.750-3 5h2c0-2.250 3-2.500 3-5 0-2.210-1.790-4-4-4z"/></svg>
<div class="t" style="left:411.00px;top:725px;font-size:17.3px;line-height:20px;font-weight:400;color:#8a8a8a;">Unmapped</div>
<div class="t" style="left:639.60px;top:705px;font-size:17.1px;line-height:19px;font-weight:400;color:#2b1a4f;">Harold Haney</div>
<div class="t" style="left:639.60px;top:726px;font-size:16.75px;line-height:19px;font-weight:400;color:#8a8a8a;">harold.haney@a...</div>
<div class="chip" style="top:710.80px"></div><div class="dot" style="top:717.40px"></div>
<div class="t" style="left:858.10px;top:717px;font-size:14.5px;line-height:16px;font-weight:700;color:#5d5c6f;">Inactive</div>
<svg class="ic" style="left:1184.2px;top:707.00px;width:36.500px;height:36.500px" viewBox="0 0 96 96"><defs><linearGradient id="aza4" x1="0.5" y1="0" x2="0.300" y2="1"><stop offset="0" stop-color="#114a8b"/><stop offset="1" stop-color="#0669bc"/></linearGradient><linearGradient id="azb4" x1="0.4" y1="0" x2="0.700" y2="1"><stop offset="0" stop-color="#3ccbf4"/><stop offset="1" stop-color="#2892df"/></linearGradient></defs>
<path d="M33.340 6.540h26.040l-27.030 80.100a4.150 4.150 0 0 1-3.940 2.810H8.150a4.140 4.140 0 0 1-3.930-5.470L29.400 9.380a4.150 4.150 0 0 1 3.940-2.830z" fill="url(#aza4)"/>
<path d="M71.170 60.260H29.880a1.910 1.910 0 0 0-1.300 3.310l26.530 24.760a4.170 4.170 0 0 0 2.850 1.130h23.380z" fill="#0078d4"/>
<path d="M66.600 9.360a4.140 4.140 0 0 0-3.930-2.820H33.650a4.150 4.150 0 0 1 3.930 2.820l25.180 74.620a4.150 4.150 0 0 1-3.930 5.480h29.020a4.150 4.150 0 0 0 3.930-5.480z" fill="url(#azb4)"/></svg>
<div class="t" style="left:1232.40px;top:705px;font-size:16.75px;line-height:19px;font-weight:700;color:#2b1a4f;">Azure</div>
<div class="t" style="left:1232.40px;top:726px;font-size:16.55px;line-height:19px;font-weight:400;color:#8a8a8a;">Test envi...</div>
<svg class="ic" style="left:336.60px;top:782.65px;width:18.9px;height:18.9px" viewBox="0 0 24 24" fill="#7a7a7a"><path d="M19 5v14H5V5h14m0-2H5c-1.100 0-2 .9-2 2v14c0 1.100.9 2 2 2h14c1.100 0 2-.9 2-2V5c0-1.100-.9-2-2-2z"/></svg>
<div class="t" style="left:384.50px;top:771px;font-size:16.5px;line-height:18px;font-weight:700;color:#2b1a4f;">matthew.beasley@balk...</div>
<svg class="ic" style="left:384.00px;top:792.20px;width:21.4px;height:21.4px" viewBox="0 0 24 24" fill="#7a7a7a"><path d="M11 18h2v-2h-2v2zm1-16C6.480 2 2 6.480 2 12s4.480 10 10 10 10-4.480 10-10S17.520 2 12 2zm0 18c-4.410 0-8-3.590-8-8s3.590-8 8-8 8 3.590 8 8-3.590 8-8 8zm0-14c-2.210 0-4 1.790-4 4h2c0-1.100.9-2 2-2s2 .9 2 2c0 2-3 1.750-3 5h2c0-2.250 3-2.500 3-5 0-2.210-1.790-4-4-4z"/></svg>
<div class="t" style="left:411.00px;top:792px;font-size:17.3px;line-height:20px;font-weight:400;color:#8a8a8a;">Unmapped</div>
<div class="t" style="left:639.60px;top:772px;font-size:17.1px;line-height:19px;font-weight:400;color:#2b1a4f;">Matthew Beasley</div>
<div class="t" style="left:639.60px;top:793px;font-size:16.75px;line-height:19px;font-weight:400;color:#8a8a8a;">matthew.beasle...</div>
<div class="chip" style="top:778.00px"></div><div class="dot" style="top:784.60px"></div>
<div class="t" style="left:858.10px;top:784px;font-size:14.5px;line-height:16px;font-weight:700;color:#5d5c6f;">Inactive</div>
<svg class="ic" style="left:1184.2px;top:774.20px;width:36.500px;height:36.500px" viewBox="0 0 96 96"><defs><linearGradient id="aza5" x1="0.5" y1="0" x2="0.300" y2="1"><stop offset="0" stop-color="#114a8b"/><stop offset="1" stop-color="#0669bc"/></linearGradient><linearGradient id="azb5" x1="0.4" y1="0" x2="0.700" y2="1"><stop offset="0" stop-color="#3ccbf4"/><stop offset="1" stop-color="#2892df"/></linearGradient></defs>
<path d="M33.340 6.540h26.040l-27.030 80.100a4.150 4.150 0 0 1-3.940 2.810H8.150a4.140 4.140 0 0 1-3.930-5.470L29.400 9.380a4.150 4.150 0 0 1 3.940-2.830z" fill="url(#aza5)"/>
<path d="M71.170 60.260H29.880a1.910 1.910 0 0 0-1.300 3.310l26.530 24.760a4.170 4.170 0 0 0 2.850 1.130h23.380z" fill="#0078d4"/>
<path d="M66.600 9.360a4.140 4.140 0 0 0-3.930-2.820H33.650a4.150 4.150 0 0 1 3.930 2.820l25.180 74.620a4.150 4.150 0 0 1-3.930 5.480h29.020a4.150 4.150 0 0 0 3.930-5.480z" fill="url(#azb5)"/></svg>
<div class="t" style="left:1232.40px;top:772px;font-size:16.75px;line-height:19px;font-weight:700;color:#2b1a4f;">Azure</div>
<div class="t" style="left:1232.40px;top:793px;font-size:16.55px;line-height:19px;font-weight:400;color:#8a8a8a;">Test envi...</div>
<svg class="ic" style="left:336.60px;top:849.85px;width:18.9px;height:18.9px" viewBox="0 0 24 24" fill="#7a7a7a"><path d="M19 5v14H5V5h14m0-2H5c-1.100 0-2 .9-2 2v14c0 1.100.9 2 2 2h14c1.100 0 2-.9 2-2V5c0-1.100-.9-2-2-2z"/></svg>
<div class="t" style="left:384.50px;top:838px;font-size:16.5px;line-height:18px;font-weight:700;color:#2b1a4f;">bobby.wang@itadminb...</div>
<svg class="ic" style="left:384.00px;top:859.40px;width:21.4px;height:21.4px" viewBox="0 0 24 24" fill="#7a7a7a"><path d="M11 18h2v-2h-2v2zm1-16C6.480 2 2 6.480 2 12s4.480 10 10 10 10-4.480 10-10S17.520 2 12 2zm0 18c-4.410 0-8-3.590-8-8s3.590-8 8-8 8 3.590 8 8-3.590 8-8 8zm0-14c-2.210 0-4 1.790-4 4h2c0-1.100.9-2 2-2s2 .9 2 2c0 2-3 1.750-3 5h2c0-2.250 3-2.500 3-5 0-2.210-1.790-4-4-4z"/></svg>
<div class="t" style="left:411.00px;top:859px;font-size:17.3px;line-height:20px;font-weight:400;color:#8a8a8a;">Unmapped</div>
<div class="t" style="left:639.60px;top:839px;font-size:17.1px;line-height:19px;font-weight:400;color:#2b1a4f;">Bobby Wang</div>
<div class="t" style="left:639.60px;top:860px;font-size:16.75px;line-height:19px;font-weight:400;color:#8a8a8a;">bobby.wang@it...</div>
<div class="chip" style="top:845.20px"></div><div class="dot" style="top:851.80px"></div>
<div class="t" style="left:858.10px;top:851px;font-size:14.5px;line-height:16px;font-weight:700;color:#5d5c6f;">Inactive</div>
<svg class="ic" style="left:1184.2px;top:841.40px;width:36.500px;height:36.500px" viewBox="0 0 96 96"><defs><linearGradient id="aza6" x1="0.5" y1="0" x2="0.300" y2="1"><stop offset="0" stop-color="#114a8b"/><stop offset="1" stop-color="#0669bc"/></linearGradient><linearGradient id="azb6" x1="0.4" y1="0" x2="0.700" y2="1"><stop offset="0" stop-color="#3ccbf4"/><stop offset="1" stop-color="#2892df"/></linearGradient></defs>
<path d="M33.340 6.540h26.040l-27.030 80.100a4.150 4.150 0 0 1-3.940 2.810H8.150a4.140 4.140 0 0 1-3.930-5.470L29.400 9.380a4.150 4.150 0 0 1 3.940-2.830z" fill="url(#aza6)"/>
<path d="M71.170 60.260H29.880a1.910 1.910 0 0 0-1.300 3.310l26.530 24.760a4.170 4.170 0 0 0 2.850 1.130h23.380z" fill="#0078d4"/>
<path d="M66.600 9.360a4.140 4.140 0 0 0-3.930-2.820H33.650a4.150 4.150 0 0 1 3.930 2.820l25.180 74.620a4.150 4.150 0 0 1-3.930 5.480h29.020a4.150 4.150 0 0 0 3.930-5.480z" fill="url(#azb6)"/></svg>
<div class="t" style="left:1232.40px;top:839px;font-size:16.75px;line-height:19px;font-weight:700;color:#2b1a4f;">Azure</div>
<div class="t" style="left:1232.40px;top:860px;font-size:16.55px;line-height:19px;font-weight:400;color:#8a8a8a;">Test envi...</div>
<svg class="ic" style="left:336.60px;top:917.05px;width:18.9px;height:18.9px" viewBox="0 0 24 24" fill="#7a7a7a"><path d="M19 5v14H5V5h14m0-2H5c-1.100 0-2 .9-2 2v14c0 1.100.9 2 2 2h14c1.100 0 2-.9 2-2V5c0-1.100-.9-2-2-2z"/></svg>
<div class="t" style="left:384.50px;top:905px;font-size:16.5px;line-height:18px;font-weight:700;color:#2b1a4f;">lacey.green@itadminba...</div>
<svg class="ic" style="left:384.00px;top:926.60px;width:21.4px;height:21.4px" viewBox="0 0 24 24" fill="#7a7a7a"><path d="M11 18h2v-2h-2v2zm1-16C6.480 2 2 6.480 2 12s4.480 10 10 10 10-4.480 10-10S17.520 2 12 2zm0 18c-4.410 0-8-3.590-8-8s3.590-8 8-8 8 3.590 8 8-3.590 8-8 8zm0-14c-2.210 0-4 1.790-4 4h2c0-1.100.9-2 2-2s2 .9 2 2c0 2-3 1.750-3 5h2c0-2.250 3-2.500 3-5 0-2.210-1.790-4-4-4z"/></svg>
<div class="t" style="left:411.00px;top:926px;font-size:17.3px;line-height:20px;font-weight:400;color:#8a8a8a;">Unmapped</div>
<div class="t" style="left:639.60px;top:907px;font-size:17.1px;line-height:19px;font-weight:400;color:#2b1a4f;">Lacey Green</div>
<div class="t" style="left:639.60px;top:927px;font-size:16.75px;line-height:19px;font-weight:400;color:#8a8a8a;">lacey.green@ita...</div>
<div class="chip" style="top:912.40px"></div><div class="dot" style="top:919.00px"></div>
<div class="t" style="left:858.10px;top:919px;font-size:14.5px;line-height:16px;font-weight:700;color:#5d5c6f;">Inactive</div>
<svg class="ic" style="left:1184.2px;top:908.60px;width:36.500px;height:36.500px" viewBox="0 0 96 96"><defs><linearGradient id="aza7" x1="0.5" y1="0" x2="0.300" y2="1"><stop offset="0" stop-color="#114a8b"/><stop offset="1" stop-color="#0669bc"/></linearGradient><linearGradient id="azb7" x1="0.4" y1="0" x2="0.700" y2="1"><stop offset="0" stop-color="#3ccbf4"/><stop offset="1" stop-color="#2892df"/></linearGradient></defs>
<path d="M33.340 6.540h26.040l-27.030 80.100a4.150 4.150 0 0 1-3.940 2.810H8.150a4.140 4.140 0 0 1-3.930-5.470L29.400 9.380a4.150 4.150 0 0 1 3.940-2.830z" fill="url(#aza7)"/>
<path d="M71.170 60.260H29.880a1.910 1.910 0 0 0-1.300 3.310l26.530 24.760a4.170 4.170 0 0 0 2.850 1.130h23.380z" fill="#0078d4"/>
<path d="M66.600 9.360a4.140 4.140 0 0 0-3.930-2.820H33.650a4.150 4.150 0 0 1 3.930 2.820l25.180 74.620a4.150 4.150 0 0 1-3.930 5.480h29.020a4.150 4.150 0 0 0 3.930-5.480z" fill="url(#azb7)"/></svg>
<div class="t" style="left:1232.40px;top:906px;font-size:16.75px;line-height:19px;font-weight:700;color:#2b1a4f;">Azure</div>
<div class="t" style="left:1232.40px;top:927px;font-size:16.55px;line-height:19px;font-weight:400;color:#8a8a8a;">Test envi...</div>
<svg class="ic" style="left:336.60px;top:984.25px;width:18.9px;height:18.9px" viewBox="0 0 24 24" fill="#7a7a7a"><path d="M19 5v14H5V5h14m0-2H5c-1.100 0-2 .9-2 2v14c0 1.100.9 2 2 2h14c1.100 0 2-.9 2-2V5c0-1.100-.9-2-2-2z"/></svg>
<div class="t" style="left:384.50px;top:972px;font-size:16.5px;line-height:18px;font-weight:700;color:#2b1a4f;">shari.blankenship@ad...</div>
<svg class="ic" style="left:384.00px;top:993.80px;width:21.4px;height:21.4px" viewBox="0 0 24 24" fill="#7a7a7a"><path d="M11 18h2v-2h-2v2zm1-16C6.480 2 2 6.480 2 12s4.480 10 10 10 10-4.480 10-10S17.520 2 12 2zm0 18c-4.410 0-8-3.590-8-8s3.590-8 8-8 8 3.590 8 8-3.590 8-8 8zm0-14c-2.210 0-4 1.790-4 4h2c0-1.100.9-2 2-2s2 .9 2 2c0 2-3 1.750-3 5h2c0-2.250 3-2.500 3-5 0-2.210-1.790-4-4-4z"/></svg>
<div class="t" style="left:411.00px;top:994px;font-size:17.3px;line-height:20px;font-weight:400;color:#8a8a8a;">Unmapped</div>
<div class="t" style="left:639.60px;top:974px;font-size:17.1px;line-height:19px;font-weight:400;color:#2b1a4f;">Shari Blankenship</div>
<div class="t" style="left:639.60px;top:995px;font-size:16.75px;line-height:19px;font-weight:400;color:#8a8a8a;">shari.blankenshi...</div>
<div class="chip" style="top:979.60px"></div><div class="dot" style="top:986.20px"></div>
<div class="t" style="left:858.10px;top:986px;font-size:14.5px;line-height:16px;font-weight:700;color:#5d5c6f;">Inactive</div>
<svg class="ic" style="left:1184.2px;top:975.80px;width:36.500px;height:36.500px" viewBox="0 0 96 96"><defs><linearGradient id="aza8" x1="0.5" y1="0" x2="0.300" y2="1"><stop offset="0" stop-color="#114a8b"/><stop offset="1" stop-color="#0669bc"/></linearGradient><linearGradient id="azb8" x1="0.4" y1="0" x2="0.700" y2="1"><stop offset="0" stop-color="#3ccbf4"/><stop offset="1" stop-color="#2892df"/></linearGradient></defs>
<path d="M33.340 6.540h26.040l-27.030 80.100a4.150 4.150 0 0 1-3.940 2.810H8.150a4.140 4.140 0 0 1-3.930-5.470L29.400 9.380a4.150 4.150 0 0 1 3.940-2.830z" fill="url(#aza8)"/>
<path d="M71.170 60.260H29.880a1.910 1.910 0 0 0-1.300 3.310l26.530 24.760a4.170 4.170 0 0 0 2.850 1.130h23.380z" fill="#0078d4"/>
<path d="M66.600 9.360a4.140 4.140 0 0 0-3.930-2.820H33.650a4.150 4.150 0 0 1 3.930 2.820l25.180 74.620a4.150 4.150 0 0 1-3.930 5.480h29.020a4.150 4.150 0 0 0 3.930-5.480z" fill="url(#azb8)"/></svg>
<div class="t" style="left:1232.40px;top:974px;font-size:16.75px;line-height:19px;font-weight:700;color:#2b1a4f;">Azure</div>
<div class="t" style="left:1232.40px;top:995px;font-size:16.55px;line-height:19px;font-weight:400;color:#8a8a8a;">Test envi...</div>
<svg class="ic" style="left:336.60px;top:1051.45px;width:18.9px;height:18.9px" viewBox="0 0 24 24" fill="#7a7a7a"><path d="M19 5v14H5V5h14m0-2H5c-1.100 0-2 .9-2 2v14c0 1.100.9 2 2 2h14c1.100 0 2-.9 2-2V5c0-1.100-.9-2-2-2z"/></svg>
<div class="t" style="left:384.50px;top:1040px;font-size:16.5px;line-height:18px;font-weight:700;color:#2b1a4f;">mary.campbell@balkan...</div>
<svg class="ic" style="left:384.00px;top:1061.00px;width:21.4px;height:21.4px" viewBox="0 0 24 24" fill="#7a7a7a"><path d="M11 18h2v-2h-2v2zm1-16C6.480 2 2 6.480 2 12s4.480 10 10 10 10-4.480 10-10S17.520 2 12 2zm0 18c-4.410 0-8-3.590-8-8s3.590-8 8-8 8 3.590 8 8-3.590 8-8 8zm0-14c-2.210 0-4 1.790-4 4h2c0-1.100.9-2 2-2s2 .9 2 2c0 2-3 1.750-3 5h2c0-2.250 3-2.500 3-5 0-2.210-1.790-4-4-4z"/></svg>
<div class="t" style="left:411.00px;top:1061px;font-size:17.3px;line-height:20px;font-weight:400;color:#8a8a8a;">Unmapped</div>
<div class="t" style="left:639.60px;top:1041px;font-size:17.1px;line-height:19px;font-weight:400;color:#2b1a4f;">Mary Campbell</div>
<div class="t" style="left:639.60px;top:1062px;font-size:16.75px;line-height:19px;font-weight:400;color:#8a8a8a;">mary.campbell@...</div>
<div class="chip" style="top:1046.80px"></div><div class="dot" style="top:1053.40px"></div>
<div class="t" style="left:858.10px;top:1053px;font-size:14.5px;line-height:16px;font-weight:700;color:#5d5c6f;">Inactive</div>
<svg class="ic" style="left:1184.2px;top:1043.00px;width:36.500px;height:36.500px" viewBox="0 0 96 96"><defs><linearGradient id="aza9" x1="0.5" y1="0" x2="0.300" y2="1"><stop offset="0" stop-color="#114a8b"/><stop offset="1" stop-color="#0669bc"/></linearGradient><linearGradient id="azb9" x1="0.4" y1="0" x2="0.700" y2="1"><stop offset="0" stop-color="#3ccbf4"/><stop offset="1" stop-color="#2892df"/></linearGradient></defs>
<path d="M33.340 6.540h26.040l-27.030 80.100a4.150 4.150 0 0 1-3.940 2.810H8.150a4.140 4.140 0 0 1-3.930-5.470L29.400 9.380a4.150 4.150 0 0 1 3.940-2.830z" fill="url(#aza9)"/>
<path d="M71.170 60.260H29.880a1.910 1.910 0 0 0-1.300 3.310l26.530 24.760a4.170 4.170 0 0 0 2.850 1.130h23.380z" fill="#0078d4"/>
<path d="M66.600 9.360a4.140 4.140 0 0 0-3.930-2.820H33.650a4.150 4.150 0 0 1 3.930 2.820l25.180 74.620a4.150 4.150 0 0 1-3.930 5.480h29.020a4.150 4.150 0 0 0 3.930-5.480z" fill="url(#azb9)"/></svg>
<div class="t" style="left:1232.40px;top:1041px;font-size:16.75px;line-height:19px;font-weight:700;color:#2b1a4f;">Azure</div>
<div class="t" style="left:1232.40px;top:1062px;font-size:16.55px;line-height:19px;font-weight:400;color:#8a8a8a;">Test envi...</div>
<svg class="ic" style="left:336.60px;top:1118.65px;width:18.9px;height:18.9px" viewBox="0 0 24 24" fill="#7a7a7a"><path d="M19 5v14H5V5h14m0-2H5c-1.100 0-2 .9-2 2v14c0 1.100.9 2 2 2h14c1.100 0 2-.9 2-2V5c0-1.100-.9-2-2-2z"/></svg>
<div class="t" style="left:384.50px;top:1107px;font-size:16.5px;line-height:18px;font-weight:700;color:#2b1a4f;">tonya.singleton@balka...</div>
<svg class="ic" style="left:384.00px;top:1128.20px;width:21.4px;height:21.4px" viewBox="0 0 24 24" fill="#7a7a7a"><path d="M11 18h2v-2h-2v2zm1-16C6.480 2 2 6.480 2 12s4.480 10 10 10 10-4.480 10-10S17.520 2 12 2zm0 18c-4.410 0-8-3.590-8-8s3.590-8 8-8 8 3.590 8 8-3.590 8-8 8zm0-14c-2.210 0-4 1.790-4 4h2c0-1.100.9-2 2-2s2 .9 2 2c0 2-3 1.750-3 5h2c0-2.250 3-2.500 3-5 0-2.210-1.790-4-4-4z"/></svg>
<div class="t" style="left:411.00px;top:1128px;font-size:17.3px;line-height:20px;font-weight:400;color:#8a8a8a;">Unmapped</div>
<div class="t" style="left:639.60px;top:1108px;font-size:17.1px;line-height:19px;font-weight:400;color:#2b1a4f;">Tonya Singleton</div>
<div class="t" style="left:639.60px;top:1129px;font-size:16.75px;line-height:19px;font-weight:400;color:#8a8a8a;">tonya.singleton...</div>
<div class="chip" style="top:1114.00px"></div><div class="dot" style="top:1120.60px"></div>
<div class="t" style="left:858.10px;top:1120px;font-size:14.5px;line-height:16px;font-weight:700;color:#5d5c6f;">Inactive</div>
<svg class="ic" style="left:1184.2px;top:1110.20px;width:36.500px;height:36.500px" viewBox="0 0 96 96"><defs><linearGradient id="aza10" x1="0.5" y1="0" x2="0.300" y2="1"><stop offset="0" stop-color="#114a8b"/><stop offset="1" stop-color="#0669bc"/></linearGradient><linearGradient id="azb10" x1="0.4" y1="0" x2="0.700" y2="1"><stop offset="0" stop-color="#3ccbf4"/><stop offset="1" stop-color="#2892df"/></linearGradient></defs>
<path d="M33.340 6.540h26.040l-27.030 80.100a4.150 4.150 0 0 1-3.940 2.810H8.150a4.140 4.140 0 0 1-3.930-5.470L29.400 9.380a4.150 4.150 0 0 1 3.940-2.830z" fill="url(#aza10)"/>
<path d="M71.170 60.260H29.880a1.910 1.910 0 0 0-1.300 3.310l26.530 24.760a4.170 4.170 0 0 0 2.850 1.130h23.380z" fill="#0078d4"/>
<path d="M66.600 9.360a4.140 4.140 0 0 0-3.930-2.820H33.650a4.150 4.150 0 0 1 3.930 2.820l25.180 74.620a4.150 4.150 0 0 1-3.930 5.480h29.020a4.150 4.150 0 0 0 3.930-5.480z" fill="url(#azb10)"/></svg>
<div class="t" style="left:1232.40px;top:1108px;font-size:16.75px;line-height:19px;font-weight:700;color:#2b1a4f;">Azure</div>
<div class="t" style="left:1232.40px;top:1129px;font-size:16.55px;line-height:19px;font-weight:400;color:#8a8a8a;">Test envi...</div>
<svg class="ic" style="left:336.60px;top:1185.85px;width:18.9px;height:18.9px" viewBox="0 0 24 24" fill="#7a7a7a"><path d="M19 5v14H5V5h14m0-2H5c-1.100 0-2 .9-2 2v14c0 1.100.9 2 2 2h14c1.100 0 2-.9 2-2V5c0-1.100-.9-2-2-2z"/></svg>
<div class="t" style="left:384.50px;top:1174px;font-size:16.5px;line-height:18px;font-weight:700;color:#2b1a4f;">colton.liu@balkanit.on...</div>
<svg class="ic" style="left:384.00px;top:1195.40px;width:21.4px;height:21.4px" viewBox="0 0 24 24" fill="#7a7a7a"><path d="M11 18h2v-2h-2v2zm1-16C6.480 2 2 6.480 2 12s4.480 10 10 10 10-4.480 10-10S17.520 2 12 2zm0 18c-4.410 0-8-3.590-8-8s3.590-8 8-8 8 3.590 8 8-3.590 8-8 8zm0-14c-2.210 0-4 1.790-4 4h2c0-1.100.9-2 2-2s2 .9 2 2c0 2-3 1.750-3 5h2c0-2.250 3-2.500 3-5 0-2.210-1.790-4-4-4z"/></svg>
<div class="t" style="left:411.00px;top:1195px;font-size:17.3px;line-height:20px;font-weight:400;color:#8a8a8a;">Unmapped</div>
<div class="t" style="left:639.60px;top:1175px;font-size:17.1px;line-height:19px;font-weight:400;color:#2b1a4f;">Colton Liu</div>
<div class="t" style="left:639.60px;top:1196px;font-size:16.75px;line-height:19px;font-weight:400;color:#8a8a8a;">colton.liu@balk...</div>
<div class="chip" style="top:1181.20px"></div><div class="dot" style="top:1187.80px"></div>
<div class="t" style="left:858.10px;top:1187px;font-size:14.5px;line-height:16px;font-weight:700;color:#5d5c6f;">Inactive</div>
<svg class="ic" style="left:1184.2px;top:1177.40px;width:36.500px;height:36.500px" viewBox="0 0 96 96"><defs><linearGradient id="aza11" x1="0.5" y1="0" x2="0.300" y2="1"><stop offset="0" stop-color="#114a8b"/><stop offset="1" stop-color="#0669bc"/></linearGradient><linearGradient id="azb11" x1="0.4" y1="0" x2="0.700" y2="1"><stop offset="0" stop-color="#3ccbf4"/><stop offset="1" stop-color="#2892df"/></linearGradient></defs>
<path d="M33.340 6.540h26.040l-27.030 80.100a4.150 4.150 0 0 1-3.940 2.810H8.150a4.140 4.140 0 0 1-3.930-5.470L29.400 9.380a4.150 4.150 0 0 1 3.940-2.830z" fill="url(#aza11)"/>
<path d="M71.170 60.260H29.880a1.910 1.910 0 0 0-1.300 3.310l26.530 24.760a4.170 4.170 0 0 0 2.850 1.130h23.380z" fill="#0078d4"/>
<path d="M66.600 9.360a4.140 4.140 0 0 0-3.930-2.820H33.650a4.150 4.150 0 0 1 3.930 2.820l25.180 74.620a4.150 4.150 0 0 1-3.930 5.480h29.020a4.150 4.150 0 0 0 3.930-5.480z" fill="url(#azb11)"/></svg>
<div class="t" style="left:1232.40px;top:1175px;font-size:16.75px;line-height:19px;font-weight:700;color:#2b1a4f;">Azure</div>
<div class="t" style="left:1232.40px;top:1196px;font-size:16.55px;line-height:19px;font-weight:400;color:#8a8a8a;">Test envi...</div>
</div></body></html>
